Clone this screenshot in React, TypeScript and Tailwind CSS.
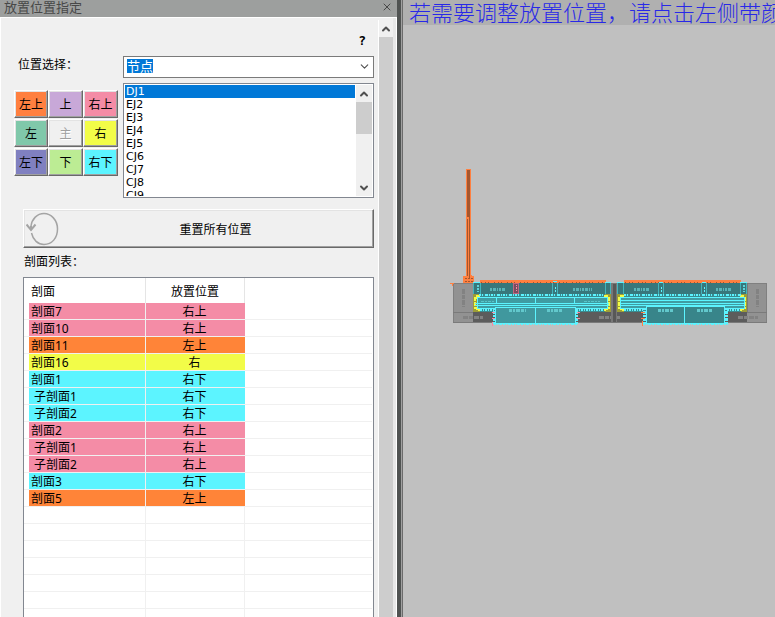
import { useState } from "react";
import { ChevronDown, ChevronUp, X } from "lucide-react";

const positions = [
  { label: "左上", color: "bg-[#ff8040]" },
  { label: "上", color: "bg-[#c8a8d8]" },
  { label: "右上", color: "bg-[#f48ca6]" },
  { label: "左", color: "bg-[#80c8aa]" },
  { label: "主", color: "bg-[#f0f0f0]", disabled: true },
  { label: "右", color: "bg-[#f2fc48]" },
  { label: "左下", color: "bg-[#8080c0]" },
  { label: "下", color: "bg-[#bcec94]" },
  { label: "右下", color: "bg-[#5cf4ff]" },
];

const rowColors: Record<string, string> = {
  右上: "bg-[#f48ca6]",
  左上: "bg-[#ff8438]",
  右: "bg-[#f2fc48]",
  右下: "bg-[#5cf4ff]",
};

const sections = [
  { name: "剖面7", position: "右上" },
  { name: "剖面10", position: "右上" },
  { name: "剖面11", position: "左上" },
  { name: "剖面16", position: "右" },
  { name: "剖面1", position: "右下" },
  { name: "子剖面1", position: "右下", child: true },
  { name: "子剖面2", position: "右下", child: true },
  { name: "剖面2", position: "右上" },
  { name: "子剖面1", position: "右上", child: true },
  { name: "子剖面2", position: "右上", child: true },
  { name: "剖面3", position: "右下" },
  { name: "剖面5", position: "左上" },
];

const nodes = ["DJ1", "EJ2", "EJ3", "EJ4", "EJ5", "CJ6", "CJ7", "CJ8", "CJ9", "CJ10"];

const emptyRows = Array.from({ length: 12 }, (_, i) => i);

const raised =
  "border border-t-white border-l-white border-r-[#696969] border-b-[#696969] shadow-[inset_-1px_-1px_0_#a0a0a0,inset_1px_1px_0_#e3e3e3]";

function PositionGrid() {
  return (
    <div className="mt-[18px] grid w-[104px] grid-cols-[34px_35px_35px] gap-y-px">
      {positions.map((p) => (
        <button
          key={p.label}
          disabled={p.disabled}
          className={`h-7 pt-0.5 text-black disabled:text-[#a0a0a0] disabled:[text-shadow:1px_1px_0_white] ${raised} ${p.color}`}
        >
          {p.label}
        </button>
      ))}
    </div>
  );
}

function NodeList() {
  const [node, setNode] = useState("DJ1");

  return (
    <div className="mt-[5px] flex h-[115px] border border-[#828790] bg-white p-px">
      <select
        aria-label="节点列表"
        size={9}
        value={node}
        onChange={(e) => setNode(e.target.value)}
        className="mr-px min-w-0 flex-1 appearance-none overflow-hidden font-['DejaVu_Sans',sans-serif] text-[11px] text-black outline-none"
      >
        {nodes.map((n) => (
          <option
            key={n}
            value={n}
            className="h-[13px] min-h-[13px] px-px py-0 checked:bg-[linear-gradient(#0078d7,#0078d7)] checked:[-webkit-text-fill-color:white]"
          >
            {n}
          </option>
        ))}
      </select>
      <div className="flex w-4 flex-col items-center bg-[#f0f0f0]">
        <button aria-label="向上滚动" className="flex h-[17px] items-center text-[#505050]">
          <ChevronUp size={12} strokeWidth={4} />
        </button>
        <div className="h-8 w-full bg-[#cdcdcd]" />
        <button aria-label="向下滚动" className="mt-auto flex h-[17px] items-center text-[#505050]">
          <ChevronDown size={12} strokeWidth={4} />
        </button>
      </div>
    </div>
  );
}

function SectionTable() {
  return (
    <div className="mt-[7px] ml-[9px] min-h-0 flex-1 overflow-hidden border border-b-0 border-[#828790] bg-white pr-px">
      <table className="w-full table-fixed border-separate border-spacing-0">
        <thead>
          <tr className="h-[25px]">
            <th className="w-[122px] border-r border-[#e5e5e5] p-0 pt-0.5 pl-[7px] text-left font-normal">剖面</th>
            <th className="w-[99px] border-r border-[#e5e5e5] p-0 pt-0.5 text-center font-normal">放置位置</th>
            <th className="p-0" />
          </tr>
        </thead>
        <tbody>
          {sections.map((s, i) => (
            <tr key={i} className="h-[17px]">
              <td className="border-r border-b border-[#f0f0f0] p-0 pl-[5px]">
                <div className={`h-4 leading-[18px] ${s.child ? "pl-[5px]" : "pl-0.5"} ${rowColors[s.position]}`}>
                  {s.name}
                </div>
              </td>
              <td className={`border-b border-[#f0f0f0] p-0 text-center ${rowColors[s.position]}`}>
                <div className="h-4 pr-0.5 leading-[18px]">{s.position}</div>
              </td>
              <td className="border-b border-[#f0f0f0] p-0" />
            </tr>
          ))}
          {emptyRows.map((i) => (
            <tr key={i} className="h-[17px]">
              <td className="border-r border-b border-[#f0f0f0] p-0" />
              <td className="border-r border-b border-[#f0f0f0] p-0" />
              <td className="border-b border-[#f0f0f0] p-0" />
            </tr>
          ))}
        </tbody>
      </table>
    </div>
  );
}

function Drawing() {
  return (
    <svg
      aria-label="平面图"
      viewBox="450 165 318 162"
      width="318"
      height="162"
      shapeRendering="crispEdges"
      className="mt-[140px] mr-[7px] ml-auto block"
    >
      {/* base blocks */}
      <rect x="453.5" y="283.5" width="313" height="39" fill="#929292" stroke="#808080" />
      <rect x="473" y="312" width="274" height="11" fill="#5c5c5c" />
      <path d="M453 312.5H473M747 312.5H767M473.5 283V312M747.5 283V312M453 322.5H767" stroke="#7a7a7a" />
      <path d="M463.5 289V307M757.5 289V307M463 317H483M599 317H620M738 317H758" stroke="#828282" strokeWidth="3" strokeDasharray="5 1 4 1" />

      {/* mast */}
      <rect x="466" y="169" width="5" height="110" fill="#ff8040" />
      <rect x="467" y="170" width="3" height="47" fill="#a4562e" />
      <path d="M467.5 219V276M469.5 217V278" stroke="#a4562e" />
      <path d="M463 276H466V279H471V275H472V276H474V283H463Z" fill="#ff8040" />
      <path d="M465 281.5H473M465 278.5H473" stroke="#a4562e" strokeDasharray="2 1" />
      <path d="M450 283.5H454M452.5 284V286" stroke="#ff8040" />

      {/* upper strips */}
      <rect x="473" y="283" width="138" height="11" fill="#38777b" />
      <rect x="617" y="283" width="130" height="11" fill="#38777b" />
      <rect x="611" y="283" width="6" height="40" fill="#777" />
      <rect x="613" y="284" width="3" height="38" fill="#585858" />
      <path d="M480 281.5H606M624 281.5H741" stroke="#ff8040" strokeWidth="3" />
      <path d="M481 282.5H606M625 282.5H741" stroke="#a4562e" strokeDasharray="1 3 1 2 1 5" />
      <path d="M473 282.5H480M553 281.5H557M605 282.5H611M617 282.5H624M659 282.5H663M702 282.5H706M740 282.5H747" stroke="#5cf4ff" />
      <path d="M473.5 283V294M480.5 283V294M552.5 283V294M557.5 283V294M605.5 283V294M610.5 283V294M617.5 283V294M623.5 283V294M658.5 283V294M663.5 283V294M701.5 283V294M706.5 283V294M740.5 283V294M746.5 283V294" stroke="#42b4bc" />
      <path d="M477.5 285V292M743.5 285V292" stroke="#5cd4dc" strokeWidth="2" strokeDasharray="2 1" />
      <path d="M555.5 287V292M661.5 287V292M704.5 287V292" stroke="#5cf4ff" strokeDasharray="2 1" />
      <rect x="513.5" y="283.5" width="5" height="10" fill="#7b4d60" stroke="#c06680" />
      <path d="M516.5 285V292" stroke="#f48ca6" strokeDasharray="1 1 2 1" />
      <path d="M490 289.5H506M573 289.5H592M634 289.5H650M716 289.5H732" stroke="#58b4b8" strokeWidth="3" strokeDasharray="2 1 3 1 1 1" />

      {/* middle bands */}
      <rect x="473" y="294" width="138" height="18" fill="#3a8b90" />
      <rect x="617" y="294" width="130" height="18" fill="#3a8b90" />
      <path d="M473 294H480V298H477V308H480V312H473ZM611 294H605V298H608V308H605V312H611ZM617 294H624V298H621V308H624V312H617ZM747 294H741V298H744V308H741V312H747Z" fill="#9c9c38" />
      <path d="M480 296H477V298H475V308H477V310H480M604 296H607V298H609V308H607V310H604M624 296H621V298H619V308H621V310H624M740 296H743V298H745V308H743V310H740" fill="none" stroke="#f2fc48" strokeWidth="2" strokeDasharray="4 1 5 1" />
      <path d="M479 295H605M624 295H741" stroke="#5cf4ff" strokeWidth="2" strokeDasharray="2 1 1 2 3 1 1 1" />
      <path d="M480 310H495M576 310H604M624 310H644M727 310H740" stroke="#5cf4ff" strokeWidth="2" strokeDasharray="2 1 1 1" />
      <rect x="477.5" y="297.5" width="130" height="11" fill="#3f9ca2" stroke="#5cf4ff" />
      <rect x="620.5" y="297.5" width="124" height="11" fill="#3f9ca2" stroke="#5cf4ff" />
      <path d="M475 303.5H609M475 305.5H609M620 300.5H745M620 303.5H745M620 305.5H745M496.5 298V303M535.5 298V303M574.5 298V303" stroke="#5cf4ff" />
      <path d="M481 301.5H495M584 301.5H600" stroke="#58c4c8" strokeDasharray="3 1 2 1" />

      {/* lower boxes */}
      <rect x="495.5" y="307.5" width="80" height="16" fill="#40989e" stroke="#5cf4ff" />
      <rect x="646.5" y="306.5" width="78" height="17" fill="#38858a" stroke="#5cf4ff" />
      <path d="M535.5 308V323M684.5 306V323" stroke="#5cf4ff" />
      <path d="M494 324H577M643 324H728" stroke="#5cf4ff" strokeWidth="2" strokeDasharray="2 1 1 1 3 1" />
      <path d="M494.5 308V325M576.5 308V325M644.5 308V325M726.5 308V325" stroke="#5cf4ff" strokeWidth="3" strokeDasharray="2 1 3 1" />
      <path d="M492 312.5H495M492 318.5H495M492.5 322V326M577 312.5H580M577 318.5H580" stroke="#f48ca6" />
      <path d="M641 312.5H645M641 318.5H645M642.5 321V326" stroke="#ff8040" />
      <path d="M509 310.5H526M547 310.5H563M658 310.5H674M697 310.5H713" stroke="#62c8cc" strokeWidth="3" strokeDasharray="3 1 2 1 4 1" />
    </svg>
  );
}

export default function App() {
  return (
    <div className="flex h-screen overflow-hidden bg-[#c0c0c0] font-['Noto_Sans','Noto_Sans_CJK_SC',sans-serif] text-xs text-black">
      <aside className="flex w-[397px] shrink-0 flex-col bg-[#f0f0f0]">
        <header className="flex h-[17px] shrink-0 items-center justify-between bg-[#9d9f9e] pr-1 pl-1 text-[#484848]">
          <h1 className="pb-1 text-[13px] leading-4">放置位置指定</h1>
          <button aria-label="关闭" className="pb-1">
            <X size={12} strokeWidth={2} />
          </button>
        </header>

        <div className="flex min-h-0 flex-1 border-t border-l border-white">
          <main className="flex min-w-0 flex-1 flex-col pr-1 pl-[13px]">
            <button aria-label="帮助" className="mt-4 mr-2 h-[14px] self-end font-['DejaVu_Sans_Mono',monospace] text-[13px] leading-[14px] font-bold">
              ?
            </button>

            <div className="mt-2 flex">
              <div className="w-[109px] shrink-0">
                <label htmlFor="kind" className="block h-4 pl-1 leading-[18px]">
                  位置选择：
                </label>
                <PositionGrid />
              </div>
              <div className="min-w-0 flex-1">
                <div className="flex h-[22px] items-center justify-between border border-[#7a7a7a] bg-white pr-0.5 pb-0.5 pl-[3px]">
                  <select
                    id="kind"
                    className="field-sizing-content h-[14px] appearance-none bg-[#0078d7] text-[13px] leading-[14px] text-white outline-none"
                  >
                    <option>节点</option>
                  </select>
                  <ChevronDown size={13} strokeWidth={2} className="text-[#505050]" />
                </div>
                <NodeList />
              </div>
            </div>

            <button className={`mt-[11px] ml-[9px] flex h-[39px] shrink-0 items-center bg-[#f0f0f0] pl-0.5 ${raised}`}>
              <svg width="34" height="34" viewBox="0 0 34 34" fill="none" stroke="#a4a4a4" strokeWidth="1.5">
                <path d="M5 14C6 7 11 1.500 18 1.500S31.500 8 31.500 17 26 32.500 18 32.500C12 32.500 7 28 5.500 21" />
                <path d="M5 14V18M.500 12.500 5 18 9.500 12.500" strokeWidth="2" />
              </svg>
              <span className="flex-1 pt-0.5 pr-0.5 text-center">重置所有位置</span>
            </button>

            <h2 className="mt-1.5 ml-[10px] h-4 shrink-0 leading-4">剖面列表：</h2>
            <SectionTable />
          </main>

          <div className="mt-0.5 flex w-[15px] shrink-0 flex-col items-center border-l border-white">
            <button aria-label="向上滚动" className="flex h-[17px] shrink-0 items-center text-[#505050]">
              <ChevronUp size={12} strokeWidth={4} />
            </button>
            <div className="w-full flex-1 bg-[#cdcdcd]" />
          </div>
          <div className="w-1 shrink-0 border-r border-white bg-[#e8e8e8]" />
        </div>
      </aside>

      <div className="w-1.5 shrink-0 border-r border-[#6b6b6b] bg-[#505352] shadow-[inset_-1px_0_0_#a0a0a0]" />

      <section className="min-w-0 flex-1 overflow-hidden">
        <p className="h-[25px] overflow-hidden bg-[#b0b0b0] pl-1.5 font-['Noto_Sans_CJK_SC',sans-serif] text-[22px] leading-[22px] font-light whitespace-nowrap text-[#2828e8]">
          若需要调整放置位置，请点击左侧带颜
        </p>
        <Drawing />
      </section>
    </div>
  );
}
